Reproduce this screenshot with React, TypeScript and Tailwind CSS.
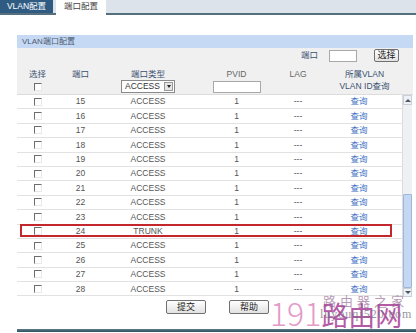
const ports = [15, 16, 17, 18, 19, 20, 21, 22, 23, 24, 25, 26, 27, 28];

const font = "font-['Liberation_Sans','Noto_Sans_CJK_SC',sans-serif]";

function Check() {
  return (
    <span className="inline-block h-[8px] w-[8px] border-t border-l border-[#6d6d6d] border-b border-r border-b-[#e8e8e8] border-r-[#e8e8e8] bg-white" />
  );
}

function Cols({ children, body }: { children: React.ReactNode[]; body?: boolean }) {
  const widths = ["w-[41px]", "w-[45px]", "w-[90px]", "w-[87px]", "w-[36px]", body ? "w-[86px]" : "w-[97px]"];
  return (
    <>
      {children.map((c, i) => (
        <div key={i} className={`${widths[i]} flex shrink-0 items-center justify-center`}>
          {c}
        </div>
      ))}
    </>
  );
}

function PortRow({ port }: { port: number }) {
  const trunk = port === 24;
  return (
    <div className="relative flex h-[14.4px] items-center border-b border-[#e2e2e2] bg-white">
      <Cols body>
        {[
          <Check key="c" />,
          <span key="p">{port}</span>,
          <span key="t">{trunk ? "TRUNK" : "ACCESS"}</span>,
          <span key="v">1</span>,
          <span key="l">---</span>,
          <span key="q" className="text-[#3d6fc4]">查询</span>,
        ]}
      </Cols>
      {trunk ? (
        <div className="absolute top-[-1px] left-[3px] h-[13px] w-[372px] border-2 border-[#c3262b]" />
      ) : null}
    </div>
  );
}

function Scrollbar() {
  return (
    <div className="flex w-[10px] flex-col border-l border-[#dcdcdc] bg-[#eef0f3]">
      <div className="flex h-[10px] items-center justify-center border border-[#c9cfd8] bg-[#eef1f6]">
        <span className="h-0 w-0 border-x-[3px] border-b-[3px] border-x-transparent border-b-[#4b5563]" />
      </div>
      <div className="flex-1" />
      <div className="h-[94px] rounded-[1px] border border-[#9fb6d8] bg-[#c5d8f3]" />
      <div className="flex h-[9px] items-center justify-center border border-[#c9cfd8] bg-[#eef1f6]">
        <span className="h-0 w-0 border-x-[3px] border-t-[3px] border-x-transparent border-t-[#4b5563]" />
      </div>
    </div>
  );
}

function Button({ label }: { label: string }) {
  return (
    <button className="flex h-[14px] w-[40px] items-center justify-center rounded-[2px] border border-[#707070] bg-gradient-to-b from-white to-[#e2e2e2] text-[9px] leading-none text-[#222]">
      {label}
    </button>
  );
}

export default function App() {
  return (
    <div className={`relative h-[333px] w-[416px] overflow-hidden bg-white text-[8.5px] leading-none text-[#555] ${font}`}>
      <div className="flex h-[15px] items-end border-b-2 border-[#566f7c] bg-[#dce3ea]">
        <div className="flex h-[14px] w-[53px] items-center justify-center bg-[#2f5b82] text-[8.5px] text-white">
          VLAN配置
        </div>
        <div className="mb-[-2px] ml-[3px] flex h-[16px] w-[50px] items-center justify-center bg-white pb-[2px] text-[8.5px] text-[#444]">
          端口配置
        </div>
      </div>

      <div className="mt-[20px] ml-[17px] w-[396px]">
        <div className="flex h-[13px] items-center bg-[#c6d9f4] pl-[5px] text-[8px] text-[#4a5a70]">
          VLAN端口配置
        </div>
        <div className="flex h-[15px] items-center justify-end bg-[#f0f0f0] pr-[14px]">
          <span className="mr-[11px] text-[#3a5070]">端口</span>
          <span className="h-[12px] w-[28px] border border-[#a8a8a8] bg-white" />
          <button className="ml-[17px] flex h-[13px] w-[25px] items-center justify-center rounded-[2px] border border-[#707070] bg-gradient-to-b from-white to-[#e2e2e2] text-[9px] leading-none text-[#222]">
            选择
          </button>
        </div>
        <div className="flex h-[16px] items-end bg-[#f0f0f0] pb-[1px] text-[#3a5070]">
          <Cols>
            {[
              <span key="a">选择</span>,
              <span key="b">端口</span>,
              <span key="c">端口类型</span>,
              <span key="d" className="text-[#666]">PVID</span>,
              <span key="e" className="text-[#666]">LAG</span>,
              <span key="f">所属VLAN</span>,
            ]}
          </Cols>
        </div>
        <div className="flex h-[16px] items-center border-b border-[#dcdcdc] bg-[#f0f0f0]">
          <Cols>
            {[
              <Check key="a" />,
              <span key="b" />,
              <div key="c" className="flex h-[13px] w-[54px] items-center justify-between border border-[#8a8a8a] bg-white pl-[3px] text-[8.5px] text-[#333]">
                ACCESS
                <span className="mr-[1px] flex h-[9px] w-[9px] items-center justify-center border border-[#9a9a9a] bg-[#e6e6e6]">
                  <span className="h-0 w-0 border-x-[2.5px] border-t-[3px] border-x-transparent border-t-[#222]" />
                </span>
              </div>,
              <span key="d" className="h-[12px] w-[48px] border border-[#a8a8a8] bg-white" />,
              <span key="e" />,
              <span key="f" className="text-[#3a5070]">VLAN ID查询</span>,
            ]}
          </Cols>
        </div>
        <div className="flex h-[202px]">
          <div className="w-[385px]">
            {ports.map((p) => (
              <PortRow key={p} port={p} />
            ))}
          </div>
          <Scrollbar />
        </div>
        <div className="flex h-[20px] items-center gap-[23px] pl-[149px]">
          <Button label="提交" />
          <Button label="帮助" />
        </div>
      </div>

      <div className="absolute right-0 bottom-[1px] left-[17px] h-[3px] bg-gradient-to-b from-[#5d7d8c] to-[#2f4f5e]" />

      <div className="pointer-events-none absolute top-[296px] left-[270px] flex items-baseline font-['Noto_Sans_CJK_SC',sans-serif] leading-none">
        <span className="text-[32px] font-light text-[#e39ac8]">191</span>
        <span className="text-[27px] text-[#b45aa6]">路由网</span>
      </div>
      <div className="pointer-events-none absolute top-[294px] left-[323px] font-['Noto_Sans_CJK_SC',sans-serif] text-[13px] leading-none tracking-[4px] text-[#8a5a88] opacity-60">
        路由器之家
      </div>
      <div className="pointer-events-none absolute top-[308px] left-[320px] font-['Liberation_Serif',serif] text-[12px] leading-none tracking-[1px] text-[#6a6a78] opacity-70">
        luyouqi520.com
      </div>
    </div>
  );
}
